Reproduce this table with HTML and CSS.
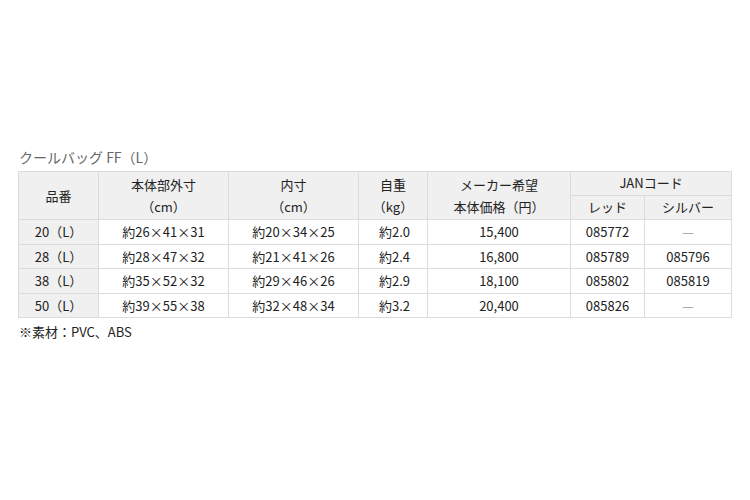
FILE: index.html
```html
<!DOCTYPE html>
<html lang="ja">
<head>
<meta charset="utf-8">
<link rel="stylesheet" href="styles.css">
</head>
<body>
<div class="page">
  <div class="title">クールバッグ FF（L）</div>
  <table class="spec">
    <colgroup>
      <col class="c1"><col class="c2"><col class="c3"><col class="c4"><col class="c5"><col class="c6"><col class="c7">
    </colgroup>
    <thead>
      <tr class="h1">
        <th rowspan="2">品番</th>
        <th rowspan="2">本体部外寸<br>（cm）</th>
        <th rowspan="2">内寸<br>（cm）</th>
        <th rowspan="2">自重<br>（kg）</th>
        <th rowspan="2">メーカー希望<br>本体価格（円）</th>
        <th colspan="2" class="jan">JANコード</th>
      </tr>
      <tr class="h2">
        <th class="jan">レッド</th>
        <th class="jan">シルバー</th>
      </tr>
    </thead>
    <tbody>
      <tr><th>20（L）</th><td>約26×41×31</td><td>約20×34×25</td><td class="left">約2.0</td><td>15,400</td><td>085772</td><td class="dash">—</td></tr>
      <tr><th>28（L）</th><td>約28×47×32</td><td>約21×41×26</td><td class="left">約2.4</td><td>16,800</td><td>085789</td><td>085796</td></tr>
      <tr><th>38（L）</th><td>約35×52×32</td><td>約29×46×26</td><td class="left">約2.9</td><td>18,100</td><td>085802</td><td>085819</td></tr>
      <tr><th>50（L）</th><td>約39×55×38</td><td>約32×48×34</td><td class="left">約3.2</td><td>20,400</td><td>085826</td><td class="dash">—</td></tr>
    </tbody>
  </table>
  <div class="note">※素材：PVC、ABS</div>
</div>
</body>
</html>
```

FILE: styles.css
```css
html, body {
  margin: 0;
  padding: 0;
  background: #fff;
}
body {
  font-family: "Noto Sans CJK JP", "Noto Sans", sans-serif;
  color: #333;
  font-size: 13px;
}
.page {
  padding: 147px 19px 0 18px;
}
.title {
  font-size: 14px;
  line-height: 20px;
  color: #666;
  padding-left: 1px;
  margin-bottom: 4px;
}
.spec {
  border-collapse: collapse;
  width: 713px;
  table-layout: fixed;
}
.c1 { width: 80px; }
.c2 { width: 130px; }
.c3 { width: 130px; }
.c4 { width: 69px; }
.c5 { width: 143px; }
.c6 { width: 74px; }
.c7 { width: 87px; }
.spec th, .spec td {
  border: 1px solid #dcdcdc;
  font-weight: normal;
  text-align: center;
  padding: 0 4px;
  line-height: 23.5px;
  color: #222;
}
.spec thead th {
  background: #f0f0f0;
  line-height: 21.5px;
  padding: 2px 4px;
}
.spec thead th.jan {
  line-height: 22.5px;
  padding: 0 4px;
}
.spec tbody th {
  background: #f0f0f0;
}
.spec td.left {
  text-align: left;
  padding-left: 20px;
}
.spec td.dash {
  color: #999;
}
.note {
  line-height: 20px;
  margin-top: 4px;
  padding-left: 1px;
  color: #222;
}
```
